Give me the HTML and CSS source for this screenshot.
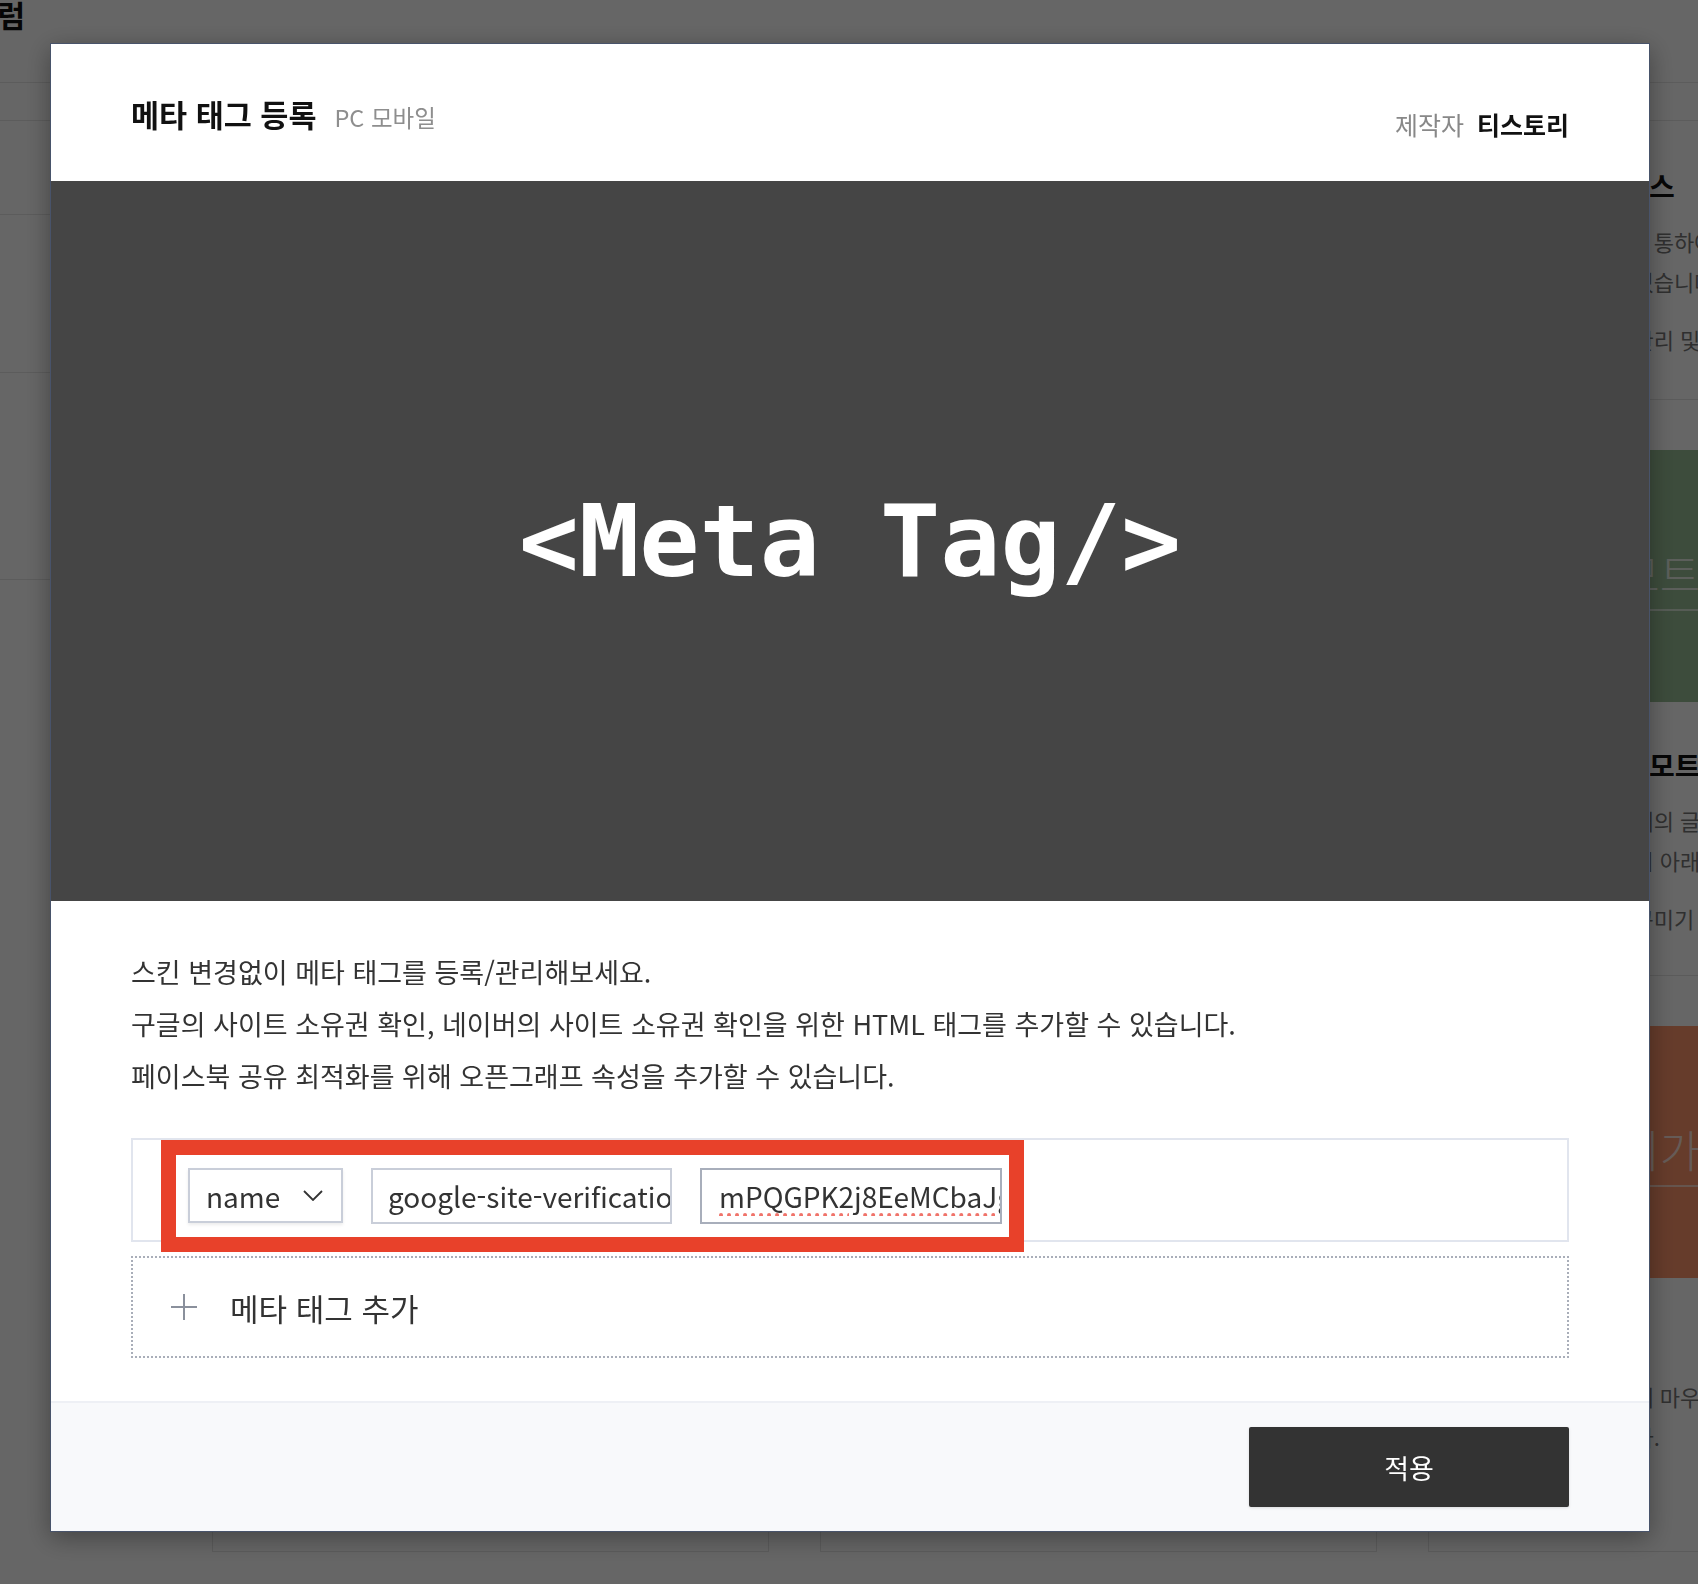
FILE: index.html
```html
<!DOCTYPE html>
<html lang="ko">
<head>
  <meta charset="utf-8">
  <title>메타 태그 등록</title>
  <link rel="stylesheet" href="styles.css">
</head>
<body>
  <div class="page">
    <header class="page-head">
      <h2 class="page-title">포럼</h2>
    </header>
    <nav class="page-tabs"></nav>

    <div class="page-body">
      <aside class="side">
        <div class="side-sec sec-a"></div>
        <div class="side-sec sec-b"></div>
        <div class="side-sec sec-c"></div>
      </aside>

      <main class="skins">
        <div class="skin-col">
          <div class="skin">
            <div class="skin-info">
              <h3 class="skin-name">구글 애널리틱스</h3>
              <p class="skin-desc">방문자 분석을 위한 코드를 추가합니다.<br>손쉽게 통계를 확인할 수 있습니다.</p>
              <p class="skin-desc">관리 및 설정</p>
            </div>
          </div>
          <div class="skin">
            <div class="skin-thumb thumb-gray"></div>
            <div class="skin-info">
              <h3 class="skin-name">코드 하이라이트</h3>
              <p class="skin-desc">본문의 코드를 보기 좋게 꾸밉니다.<br>다양한 테마를 지원합니다.</p>
              <p class="skin-desc">블로그 꾸미기</p>
            </div>
          </div>
          <div class="skin">
            <div class="skin-thumb thumb-gray"></div>
            <div class="skin-info">
              <h3 class="skin-name">배경음악 플레이어</h3>
              <p class="skin-desc">블로그에 배경음악을 추가합니다.<br>재생 목록을 설정할 수 있습니다.</p>
              <p class="skin-desc">블로그 꾸미기</p>
            </div>
          </div>
        </div>

        <div class="skin-col">
          <div class="skin">
            <div class="skin-info">
              <h3 class="skin-name">네이버 애널리틱스</h3>
              <p class="skin-desc">네이버 통계 서비스를 연결합니다.<br>유입 경로를 확인할 수 있습니다.</p>
              <p class="skin-desc">관리 및 설정</p>
            </div>
          </div>
          <div class="skin">
            <div class="skin-thumb thumb-blue"></div>
            <div class="skin-info">
              <h3 class="skin-name">카카오 공유하기</h3>
              <p class="skin-desc">글을 카카오톡으로 공유합니다.<br>공유 버튼이 본문 하단에 보입니다.</p>
              <p class="skin-desc">소셜 연동</p>
            </div>
          </div>
          <div class="skin">
            <div class="skin-thumb thumb-gray"></div>
            <div class="skin-info">
              <h3 class="skin-name">마우스 커서</h3>
              <p class="skin-desc">마우스 커서 모양을 바꿉니다.<br>원하는 이미지를 사용할 수 있습니다.</p>
              <p class="skin-desc">블로그 꾸미기</p>
            </div>
          </div>
        </div>

        <div class="skin-col">
          <div class="skin">
            <div class="skin-info">
              <h3 class="skin-name">방문자 통계 서비스</h3>
              <p class="skin-desc">외부의 통계 서비스를 통하여<br>방문자를 분석할 수 있습니다.</p>
              <p class="skin-desc">분류는 블로그 통계 관리 및 설정</p>
            </div>
          </div>
          <div class="skin">
            <div class="skin-thumb thumb-green"><span class="thumb-label">리모트 콘텐츠</span></div>
            <div class="skin-info">
              <h3 class="skin-name">나만의 블로그 리모트</h3>
              <p class="skin-desc">원하는 블로그 여러 배의 글을<br>최신의 글 목록을 다시 아래에 보여줍니다.</p>
              <p class="skin-desc">분류는 블로그 화면 꾸미기</p>
            </div>
          </div>
          <div class="skin">
            <div class="skin-thumb thumb-brown"><span class="thumb-label">새 페이지가 열려요 안내</span></div>
            <div class="skin-info">
              <h3 class="skin-name">마우스 효과</h3>
              <p class="skin-desc">더 예쁜 블로그 화면에 마우스 효과를<br>효과를 줄 수 있습니다.</p>
              <p class="skin-desc">블로그 꾸미기</p>
            </div>
          </div>
        </div>
      </main>
    </div>
  </div>

  <div class="dim">
    <div class="modal">
      <div class="modal-head">
        <div class="head-title">
          <h1>메타 태그 등록</h1>
          <span class="platform">PC 모바일</span>
        </div>
        <div class="maker">
          <span class="maker-label">제작자</span>
          <strong>티스토리</strong>
        </div>
      </div>

      <div class="hero">
        <span class="hero-text">&lt;Meta Tag/&gt;</span>
      </div>

      <div class="modal-body">
        <p class="desc">
          스킨 변경없이 메타 태그를 등록/관리해보세요.<br>
          구글의 사이트 소유권 확인, 네이버의 사이트 소유권 확인을 위한 HTML 태그를 추가할 수 있습니다.<br>
          페이스북 공유 최적화를 위해 오픈그래프 속성을 추가할 수 있습니다.
        </p>

        <div class="tag-row">
          <div class="select">
            <span>name</span>
            <svg width="20" height="11" viewBox="0 0 20 11"><polyline points="1,1 10,10 19,1" fill="none" stroke="#333" stroke-width="1.8"/></svg>
          </div>
          <input class="field" type="text" value="google-site-verification">
          <input class="field field-focus" type="text" value="mPQGPK2j8EeMCbaJgWq3xLr0vT">
          <div class="highlight"></div>
        </div>

        <button class="add-tag" type="button">
          <svg width="26" height="26" viewBox="0 0 26 26"><line x1="13" y1="0" x2="13" y2="26" stroke="#8a909c" stroke-width="2"/><line x1="0" y1="13" x2="26" y2="13" stroke="#8a909c" stroke-width="2"/></svg>
          메타 태그 추가
        </button>
      </div>

      <div class="modal-foot">
        <button class="apply" type="button">적용</button>
      </div>
    </div>
  </div>
</body>
</html>
```

FILE: styles.css
```css
body {
  margin: 0;
  height: 1584px;
  overflow: hidden;
  background: #fff;
  color: #333;
  font-family: "Noto Sans CJK KR", "Noto Sans", sans-serif;
}

/* 뒤쪽 페이지 */
.page-head {
  height: 86px;
  border-bottom: 1px solid #e6e6e6;
}

.page-title {
  margin: -4px 0 0 -30px;
  font-size: 30px;
  line-height: 36px;
  font-weight: 700;
  color: #111;
}

.page-tabs {
  height: 37px;
  border-bottom: 1px solid #e6e6e6;
}

.page-body {
  display: flex;
}

.side {
  width: 190px;
  flex: none;
}

.side-sec {
  border-bottom: 1px solid #e6e6e6;
}

.sec-a { height: 93px; }
.sec-b { height: 157px; }
.sec-c { height: 206px; }

.skins {
  display: grid;
  grid-template-columns: repeat(3, 557px);
  column-gap: 51px;
  margin-left: 22px;
}

.skin-col {
  display: flex;
  flex-direction: column;
  gap: 50px;
}

.skin {
  border: 1px solid #e4e4e4;
  border-top: none;
  background: #fff;
}

.skin-thumb {
  height: 252px;
  display: flex;
  align-items: center;
  justify-content: center;
}

.thumb-gray { background: #d9dadc; }
.thumb-blue { background: #b9c9dc; }
.thumb-green { background: #98be96; }
.thumb-brown { background: #ff966c; }

.thumb-label {
  font-size: 44px;
  font-weight: 300;
  white-space: nowrap;
  color: rgba(255, 255, 255, 0.75);
  border-bottom: 2px solid rgba(255, 255, 255, 0.6);
  padding: 0 4px 4px;
}

.skin-info {
  padding: 42px 24px 40px;
}

.skin-thumb + .skin-info {
  padding: 40px 24px 37px;
}

.skin-name {
  margin: 0;
  font-size: 28px;
  line-height: 46px;
  font-weight: 700;
  color: #111;
  white-space: nowrap;
}

.skin-desc {
  margin: 12px 0 0;
  font-size: 22px;
  line-height: 40px;
  color: #777;
  white-space: nowrap;
}

.skin-desc + .skin-desc {
  margin-top: 18px;
}

/* 모달 */
.dim {
  position: fixed;
  inset: 0;
  background: rgba(0, 0, 0, 0.6);
  padding-top: 43px;
}

.modal {
  width: 1600px;
  margin-left: 50px;
  box-sizing: border-box;
  border: 1px solid #48536a;
  background: #fff;
  box-shadow: 0 6px 24px rgba(0, 0, 0, 0.35);
}

.modal-head {
  height: 137px;
  padding: 0 80px;
  display: flex;
  justify-content: space-between;
  align-items: flex-start;
}

.head-title {
  padding-top: 50px;
  display: flex;
  align-items: baseline;
  line-height: 40px;
}

.head-title h1 {
  margin: 0;
  font-size: 30.5px;
  font-weight: 700;
  color: #111;
}

.platform {
  margin-left: 18px;
  font-size: 23.5px;
  color: #8e8e8e;
}

.maker {
  padding-top: 60px;
  line-height: 40px;
  font-size: 25px;
}

.maker-label {
  color: #888;
  margin-right: 6px;
}

.maker strong {
  color: #111;
}

.hero {
  height: 720px;
  background: #454545;
  display: flex;
  align-items: center;
  justify-content: center;
}

.hero-text {
  font-family: "DejaVu Sans Mono", monospace;
  font-weight: 700;
  font-size: 100px;
  color: #fff;
}

.modal-body {
  padding: 45px 80px 43px;
}

.desc {
  margin: 0;
  font-size: 27px;
  line-height: 52px;
  color: #333;
}

.tag-row {
  position: relative;
  margin-top: 36px;
  border: 2px solid #e1e5ee;
  padding: 28px 55px 16px;
  display: flex;
  gap: 28px;
}

.select {
  width: 155px;
  height: 55px;
  box-sizing: border-box;
  border: 2px solid #c9ced9;
  padding: 0 18px 0 16px;
  display: flex;
  align-items: center;
  justify-content: space-between;
  font-size: 28px;
  color: #333;
  box-shadow: 0 2px 3px rgba(0, 0, 0, 0.08);
}

.field {
  width: 301px;
  height: 56px;
  box-sizing: border-box;
  border: 2px solid #c9ced9;
  padding: 0 0 0 15px;
  font-family: inherit;
  font-size: 28px;
  color: #333;
  outline: none;
}

.field-focus {
  width: 302px;
  padding-left: 17px;
  border-color: #a8aebb;
  text-decoration: underline dotted #f0736a;
  text-decoration-thickness: 4px;
  text-underline-offset: 5px;
}

/* 캡처에 표시된 빨간 강조 박스 */
.highlight {
  position: absolute;
  left: 28px;
  top: 0;
  width: 863px;
  height: 112px;
  box-sizing: border-box;
  border: 15px solid #e8412a;
  pointer-events: none;
}

.add-tag {
  width: 100%;
  height: 102px;
  margin-top: 14px;
  border: 2px dotted #a9aeb9;
  background: #fff;
  padding: 0 0 0 38px;
  display: flex;
  align-items: center;
  gap: 33px;
  font-family: inherit;
  font-size: 31px;
  color: #333;
  cursor: pointer;
}

.modal-foot {
  border-top: 2px solid #eef0f5;
  background: #f8f9fb;
  padding: 24px 80px;
  display: flex;
  justify-content: flex-end;
}

.apply {
  width: 320px;
  height: 80px;
  border: none;
  border-radius: 2px;
  background: #333;
  color: #fff;
  font-family: inherit;
  font-size: 27px;
  box-shadow: 0 1px 3px rgba(0, 0, 0, 0.12);
  cursor: pointer;
}
```
